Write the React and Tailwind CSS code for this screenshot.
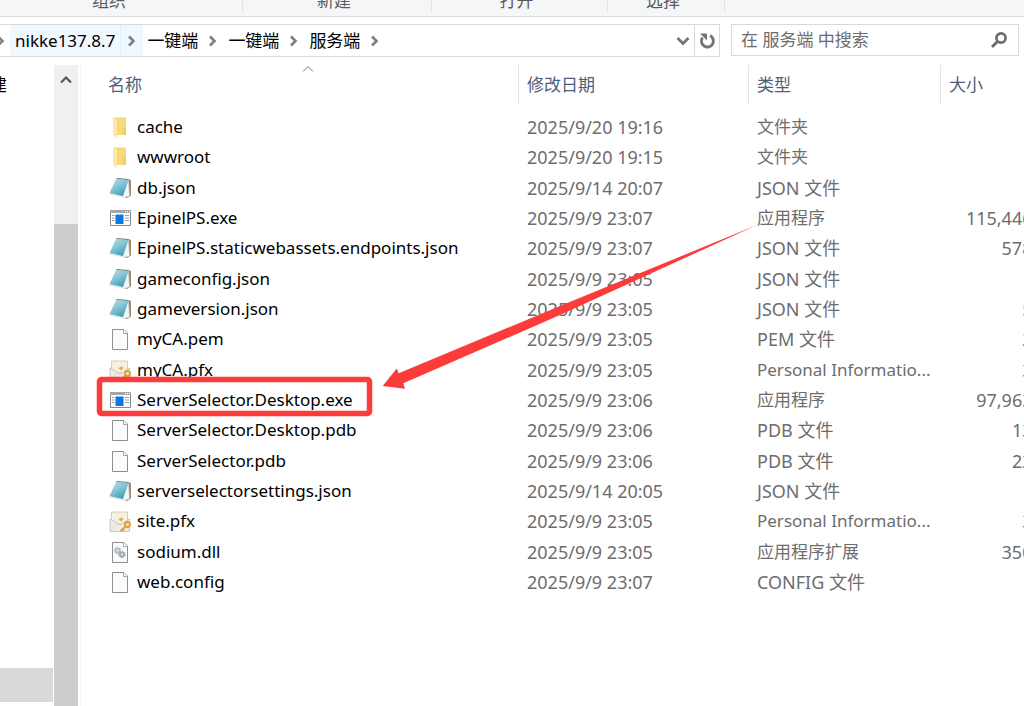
const ribbonGroups = [
  { label: '组织', className: 'w-[243px] pr-6' },
  { label: '新建', className: 'w-[189px] pr-1.5' },
  { label: '打开', className: 'w-44 pr-1.5' },
  { label: '选择', className: 'w-[117px] pr-1.5' },
];

const files = [
  { name: 'cache', date: '2025/9/20 19:16', type: '文件夹', size: '', icon: 'folder' },
  { name: 'wwwroot', date: '2025/9/20 19:15', type: '文件夹', size: '', icon: 'folder' },
  { name: 'db.json', date: '2025/9/14 20:07', type: 'JSON 文件', size: '1 KB', icon: 'notepad' },
  { name: 'EpinelPS.exe', date: '2025/9/9 23:07', type: '应用程序', size: '115,446 KB', icon: 'app' },
  {
    name: 'EpinelPS.staticwebassets.endpoints.json',
    date: '2025/9/9 23:07',
    type: 'JSON 文件',
    size: '578 KB',
    icon: 'notepad',
  },
  { name: 'gameconfig.json', date: '2025/9/9 23:05', type: 'JSON 文件', size: '1 KB', icon: 'notepad' },
  { name: 'gameversion.json', date: '2025/9/9 23:05', type: 'JSON 文件', size: '5 KB', icon: 'notepad' },
  { name: 'myCA.pem', date: '2025/9/9 23:05', type: 'PEM 文件', size: '2 KB', icon: 'file' },
  { name: 'myCA.pfx', date: '2025/9/9 23:05', type: 'Personal Informatio...', size: '3 KB', icon: 'cert' },
  { name: 'ServerSelector.Desktop.exe', date: '2025/9/9 23:06', type: '应用程序', size: '97,963 KB', icon: 'app' },
  { name: 'ServerSelector.Desktop.pdb', date: '2025/9/9 23:06', type: 'PDB 文件', size: '13 KB', icon: 'file' },
  { name: 'ServerSelector.pdb', date: '2025/9/9 23:06', type: 'PDB 文件', size: '22 KB', icon: 'file' },
  { name: 'serverselectorsettings.json', date: '2025/9/14 20:05', type: 'JSON 文件', size: '1 KB', icon: 'notepad' },
  { name: 'site.pfx', date: '2025/9/9 23:05', type: 'Personal Informatio...', size: '3 KB', icon: 'cert' },
  { name: 'sodium.dll', date: '2025/9/9 23:05', type: '应用程序扩展', size: '350 KB', icon: 'dll' },
  { name: 'web.config', date: '2025/9/9 23:07', type: 'CONFIG 文件', size: '1 KB', icon: 'file' },
];

function FolderIcon() {
  return (
    <svg viewBox="0 0 24 24" className="size-6">
      <path d="M6 2.500h12v17.500H9L6 17z" fill="#f8d978" />
      <path d="M15 12.500h3V20h-3z" fill="#f0cb68" />
      <path d="M5 2.500l4 2V23l-4-3z" fill="#fde8a2" />
    </svg>
  );
}

function NotepadIcon() {
  return (
    <svg viewBox="0 0 24 24" className="size-6">
      <defs>
        <linearGradient id="cover" x1="0" y1="0" x2=".6" y2="1">
          <stop offset="0" stopColor="#b9e0e8" />
          <stop offset=".5" stopColor="#86c6d6" />
          <stop offset="1" stopColor="#3f9db5" />
        </linearGradient>
      </defs>
      <path d="M20.500 3l2.500 1v15.500L19 22l-3-1z" fill="#9a8a6c" />
      <path d="M20.500 3.500l1 16.500-5 1.500-3.500-2z" fill="#f4f7f8" stroke="#b5bdc0" strokeWidth=".5" />
      <path d="M1.500 17L15 20l.5 1.500L1.500 18.500z" fill="#d8e8ec" />
      <path d="M8 3l12.500 1L15 20 1.500 17z" fill="url(#cover)" />
      <path d="M8.500 2.500l12 1" stroke="#5f7e86" strokeWidth="1.200" />
    </svg>
  );
}

function AppIcon() {
  return (
    <svg viewBox="0 0 24 24" className="size-6">
      <path d="M2.500 4.500h20v15h-20z" fill="#fff" stroke="#85888b" />
      <path d="M2 4h21v3H2z" fill="#a5a8ab" />
      <path d="M17 5.500h1m1 0h1m1 0h1" stroke="#fff" />
      <path d="M7.500 8.500h8V18h-8z" fill="#0a78de" />
      <path d="M4 9.500h2.500M4 12h2.500M4 14.500h2.500M17 9.500h4M17 12h4M17 14.500h4" stroke="#9a9da0" />
    </svg>
  );
}

function FileIcon() {
  return (
    <svg viewBox="0 0 24 24" className="size-6">
      <path d="M4.500 2.500H16l3.500 3.500v16.500h-15z" fill="#fbfbfb" stroke="#8f8f8f" />
      <path d="M15.500 2.500v4h4" fill="#fff" stroke="#a5a5a5" />
    </svg>
  );
}

function CertIcon() {
  return (
    <svg viewBox="0 0 24 24" className="size-6">
      <path d="M3.500 3h16v12h-16z" fill="#f7f0df" stroke="#d0c4a5" strokeWidth=".8" />
      <path d="M2 10l10 6 9.500-6v12.500H2z" fill="#ededeb" stroke="#bdbdba" strokeWidth=".8" />
      <path d="M2 22l8-7.500" stroke="#cfcfcc" strokeWidth=".8" />
      <path d="M10.500 10.500c1-2 4-2.500 5-1l-2 3z" fill="#dcb04e" />
      <circle cx="19.500" cy="15.500" r="2.600" fill="#f7dfa3" stroke="#dd9f35" strokeWidth="1.800" />
      <path d="M17.500 17.500L12.500 22M14.500 20l1.500 1.800" stroke="#dd9f35" strokeWidth="1.800" />
    </svg>
  );
}

function DllIcon() {
  return (
    <svg viewBox="0 0 24 24" className="size-6">
      <path d="M4.500 2.500H16l3.500 3.500v16.500h-15z" fill="#fbfbfb" stroke="#8f8f8f" />
      <path d="M15.500 2.500v4h4" fill="#fff" stroke="#a5a5a5" />
      <circle cx="9.500" cy="10.500" r="2" fill="none" stroke="#b4bfc9" strokeWidth="2.200" />
      <circle cx="9.500" cy="10.500" r="3.400" fill="none" stroke="#b4bfc9" strokeDasharray="1.400 1.200" />
      <circle cx="14" cy="14.500" r="2" fill="none" stroke="#9dabb8" strokeWidth="2.200" />
      <circle cx="14" cy="14.500" r="3.400" fill="none" stroke="#9dabb8" strokeDasharray="1.400 1.200" />
    </svg>
  );
}

const icons = {
  folder: FolderIcon,
  notepad: NotepadIcon,
  app: AppIcon,
  file: FileIcon,
  cert: CertIcon,
  dll: DllIcon,
};

function CrumbArrow() {
  return (
    <svg viewBox="0 0 10 12" className="h-3 w-2.5 shrink-0" fill="none">
      <path d="M2 1.500L6.500 6 2 10.500" stroke="#808080" strokeWidth="2.600" />
    </svg>
  );
}

function Ribbon() {
  return (
    <div className="flex h-[17px] shrink-0 items-end overflow-hidden border-b border-[#dadbdc] bg-[#f5f6f7] pb-[3px]">
      {ribbonGroups.map(({ label, className }) => (
        <div
          key={label}
          className={`flex h-10 shrink-0 items-end justify-center border-r border-[#e2e3e4] pb-0.5 text-[17px] leading-5 text-[#5a5a5a] ${className}`}
        >
          {label}
        </div>
      ))}
    </div>
  );
}

function AddressBar() {
  return (
    <div className="flex shrink-0 gap-[11px] pt-[7px] pr-[5px]">
      <div className="flex h-[33px] min-w-0 flex-1 border border-l-0 border-[#d9d9d9]">
        <nav aria-label="路径" className="flex flex-1 items-center text-[17px]">
          <span className="flex w-2.5 justify-start overflow-hidden">
            <span className="-ml-1">
              <CrumbArrow />
            </span>
          </span>
          <span className="flex h-full items-stretch bg-[#eff7ff]">
            <button type="button" className="border-r border-[#e3effa] px-[5px]">
              nikke137.8.7
            </button>
            <span className="flex w-[22px] items-center justify-center">
              <CrumbArrow />
            </span>
          </span>
          {['一键端', '一键端', '服务端'].map((crumb, i) => (
            <span key={i} className="flex items-center">
              <button type="button" className="px-1">
                {crumb}
              </button>
              <span className="flex w-[22px] items-center justify-center">
                <CrumbArrow />
              </span>
            </span>
          ))}
        </nav>
        <button type="button" aria-label="以前的位置" className="flex w-[22px] items-center justify-center">
          <svg viewBox="0 0 14 10" className="h-2.5 w-3.5" fill="none">
            <path d="M1.500 2L7 7.500 12.500 2" stroke="#757575" strokeWidth="2.800" />
          </svg>
        </button>
        <button
          type="button"
          aria-label="刷新"
          className="flex w-[25px] items-center justify-center border-l border-[#d9d9d9]"
        >
          <svg viewBox="0 0 18 18" className="size-[18px]" fill="none">
            <path d="M12 3.600A6 6 0 1 1 4.500 5.500" stroke="#757575" strokeWidth="2.900" />
            <path d="M2 1.500h7v7z" fill="#757575" />
          </svg>
        </button>
      </div>
      <label className="flex h-8 w-72 shrink-0 items-center border border-[#d9d9d9] pr-2.5 pl-[9px]">
        <input
          type="search"
          aria-label="搜索"
          placeholder="在 服务端 中搜索"
          className="min-w-0 flex-1 text-[17px] outline-none placeholder:text-[#6d6d6d]"
        />
        <svg viewBox="0 0 18 18" className="size-[18px]" fill="none">
          <circle cx="11" cy="7" r="4.600" stroke="#6d6d6d" strokeWidth="2.700" />
          <path d="M7.500 10.500L2 16" stroke="#6d6d6d" strokeWidth="3" />
        </svg>
      </label>
    </div>
  );
}

function NavPane() {
  return (
    <aside className="flex w-[78px] shrink-0">
      <div className="flex flex-1 flex-col overflow-hidden pr-px pb-1">
        <div className="flex h-10 w-[7px] items-center justify-end overflow-hidden text-[17px]">
          <span>建</span>
        </div>
        <div className="mt-auto h-[34px] bg-[#d9d9d9]" />
      </div>
      <div className="flex w-6 flex-col bg-[#f0f0f0]">
        <button type="button" aria-label="向上滚动" className="flex h-7 items-center justify-center">
          <svg viewBox="0 0 12 9" className="h-[9px] w-3" fill="none">
            <path d="M1 7.500l5-5 5 5" stroke="#555" strokeWidth="2.200" />
          </svg>
        </button>
        <div className="mt-[131px] flex-1 bg-[#cdcdcd]" />
      </div>
    </aside>
  );
}

function FileRow({ name, date, type, size, icon }) {
  const Icon = icons[icon];
  const hasExtension = /^[A-Z]+ /.test(type);

  return (
    <tr className="text-[#6d6d6d]">
      <td className="pl-[27px]">
        <div className="flex items-center gap-[5px]">
          <Icon />
          <span className="text-[17px] text-black">{name}</span>
        </div>
      </td>
      <td className="pl-[9px]">{date}</td>
      <td className={hasExtension ? 'pl-[9px]' : 'pl-[9px] text-[17px]'}>{type}</td>
      <td className="pr-2.5 text-right">{size}</td>
    </tr>
  );
}

function FileList() {
  return (
    <main className="min-w-0 flex-1 overflow-hidden border-l border-[#f5f5f5]">
      <table className="h-[532px] w-[989px] table-fixed text-left text-[18px] leading-6 whitespace-nowrap">
        <colgroup>
          <col className="w-[437px]" />
          <col className="w-[230px]" />
          <col className="w-48" />
          <col className="w-[130px]" />
        </colgroup>
        <thead className="text-[17px] text-[#4c607a]">
          <tr className="h-[47px] align-top">
            <th className="p-0 font-normal">
              <div className="flex h-[39px] items-center pl-[27px]">
                <span className="w-[194px]">名称</span>
                <svg viewBox="0 0 12 7" className="h-[7px] w-3 self-start" fill="none">
                  <path d="M1 6.500l5-5 5 5" stroke="#808080" />
                </svg>
              </div>
            </th>
            {['修改日期', '类型', '大小'].map((title) => (
              <th key={title} className="p-0 font-normal">
                <div className="flex h-[39px] items-center border-l border-[#e5e5e5] pl-2">{title}</div>
              </th>
            ))}
          </tr>
        </thead>
        <tbody>
          {files.map((file) => (
            <FileRow key={file.name} {...file} />
          ))}
        </tbody>
      </table>
    </main>
  );
}

// Red box around the server selector and the arrow that points at it
function Annotation() {
  return (
    <svg
      viewBox="0 0 1024 706"
      className="pointer-events-none absolute top-0 left-0 h-[706px] w-[1024px]"
      fill="none"
    >
      <rect x="99.500" y="379.500" width="270" height="34" rx="2" stroke="#fc3b3b" strokeWidth="5.500" />
      <path d="M382.700 386l14-17.500 2 4.800L560 306l197-81-197 90L403.300 383.300l1.700 5.400z" fill="#fc3b3b" />
    </svg>
  );
}

export default function App() {
  return (
    <div className="relative flex h-screen flex-col overflow-hidden bg-white font-['Noto_Sans','Noto_Sans_CJK_SC',sans-serif] text-black">
      <Ribbon />
      <AddressBar />
      <div className="flex min-h-0 flex-1 pt-2">
        <NavPane />
        <div className="w-0.5 shrink-0" />
        <FileList />
      </div>
      <Annotation />
    </div>
  );
}
